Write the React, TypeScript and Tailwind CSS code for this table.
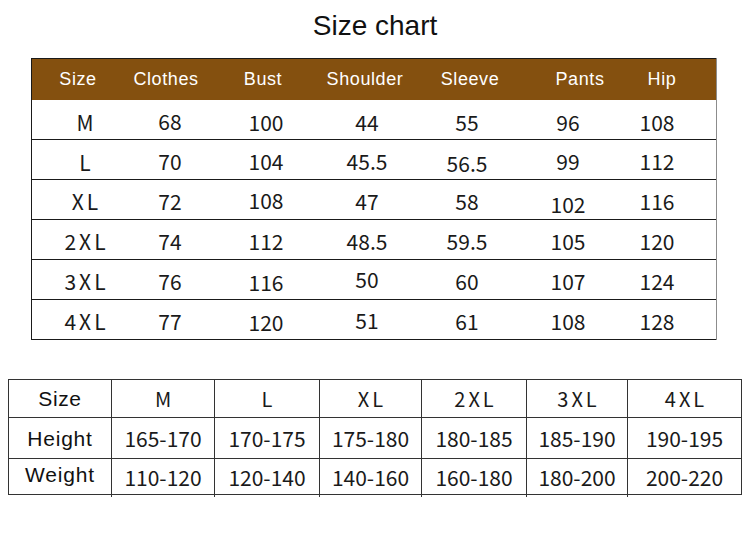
const heads = [
  { label: "Size", cls: "pr-[0px]" },
  { label: "Clothes", cls: "pr-[8px]" },
  { label: "Bust", cls: "pr-[6px]" },
  { label: "Shoulder", cls: "pr-[4px]" },
  { label: "Sleeve", cls: "pl-[2px]" },
  { label: "Pants", cls: "pl-[24px]" },
  { label: "Hip", cls: "pr-[8px]" },
]

// each cell: [text, extra class for small vertical drift seen in the chart]
const rows: [string, string][][] = [
  [["M", "pt-[5px]"], ["68", "pt-[4px]"], ["100", "pt-[6px]"], ["44", "pt-[6px]"], ["55", "pt-[6px]"], ["96", "pt-[6px]"], ["108", "pt-[6px]"]],
  [["L", "pt-[6px]"], ["70", "pt-[4px]"], ["104", "pt-[4px]"], ["45.5", "pt-[4px]"], ["56.5", "pt-[8px]"], ["99", "pt-[4px]"], ["112", "pt-[4px]"]],
  [["XL", "pt-[4px]"], ["72", "pt-[4px]"], ["108", "pt-[2px]"], ["47", "pt-[4px]"], ["58", "pt-[4px]"], ["102", "pt-[9px]"], ["116", "pt-[4px]"]],
  [["2XL", "pt-[4px]"], ["74", "pt-[4px]"], ["112", "pt-[4px]"], ["48.5", "pt-[4px]"], ["59.5", "pt-[4px]"], ["105", "pt-[4px]"], ["120", "pt-[4px]"]],
  [["3XL", "pt-[3px]"], ["76", "pt-[3px]"], ["116", "pt-[6px]"], ["50", "pt-[0px]"], ["60", "pt-[3px]"], ["107", "pt-[3px]"], ["124", "pt-[3px]"]],
  [["4XL", "pt-[3px]"], ["77", "pt-[3px]"], ["120", "pt-[6px]"], ["51", "pt-[1px]"], ["61", "pt-[3px]"], ["108", "pt-[3px]"], ["128", "pt-[3px]"]],
]

const colPad = ["", "", "", "", "pr-[4px]", "", "pr-[18px]"]

const sizes = ["M", "L", "XL", "2XL", "3XL", "4XL"]
const heights = ["165-170", "170-175", "175-180", "180-185", "185-190", "190-195"]
const weights = ["110-120", "120-140", "140-160", "160-180", "180-200", "200-220"]

const cjk = "font-['Noto_Sans_CJK_SC','Noto_Sans',sans-serif]"
const arial = "font-['Liberation_Sans',Arial,sans-serif]"

const App = () => {
  return (
    <div className="w-[750px] h-[534px] bg-white overflow-hidden">
      <div className={`h-[58px] pt-[11px] text-center text-[28px] leading-[30px] text-[#111] ${arial}`}>
        Size chart
      </div>

      {/* measurement table */}
      <div className="ml-[31px] w-[686px] border-l border-l-[#1a1a1a] border-r border-r-[#8c8c8c]">
        <div
          className={`grid grid-cols-[92px_92px_100px_102px_102px_96px_1fr] h-[42px] bg-[#84500f] border-t border-t-[#1a1a1a] items-center text-white text-[18px] tracking-[0.6px] ${arial}`}
        >
          {heads.map((h) => (
            <div key={h.label} className={`text-center ${h.cls}`}>
              {h.label}
            </div>
          ))}
        </div>
        {rows.map((row, i) => (
          <div
            key={i}
            className={`grid grid-cols-[92px_92px_100px_102px_102px_96px_1fr] h-[40px] border-b border-b-[#1a1a1a] text-[21px] text-[#1a1a1a] ${cjk}`}
          >
            {row.map(([v, cls], j) => (
              <div
                key={j}
                className={`flex items-center justify-center leading-none ${colPad[j]} ${cls} ${j === 0 ? "tracking-[3px] pl-[17px]" : ""}`}
              >
                {v}
              </div>
            ))}
          </div>
        ))}
      </div>

      {/* height / weight table */}
      <div className="mt-[39px] ml-[8px] w-[734px] border border-[#333]">
        <div className="grid grid-cols-[103px_103px_105px_102px_105px_101px_1fr] h-[38px] border-b border-b-[#333]">
          <div className={`flex items-center justify-center border-r border-r-[#333] text-[21px] tracking-[0.6px] text-[#111] ${arial}`}>
            Size
          </div>
          {sizes.map((s, i) => (
            <div
              key={s}
              className={`flex items-center justify-center pl-[3px] text-[20px] tracking-[3px] text-[#1a1a1a] ${cjk} ${i < 5 ? "border-r border-r-[#333]" : ""}`}
            >
              {s}
            </div>
          ))}
        </div>
        <div className="grid grid-cols-[103px_103px_105px_102px_105px_101px_1fr] h-[41px] border-b border-b-[#333]">
          <div className={`flex items-center justify-center pt-[2px] border-r border-r-[#333] text-[21px] tracking-[0.8px] text-[#111] ${arial}`}>
            Height
          </div>
          {heights.map((s, i) => (
            <div
              key={s}
              className={`flex items-center justify-center pt-[2px] text-[21px] text-[#1a1a1a] ${cjk} ${i < 5 ? "border-r border-r-[#333]" : ""}`}
            >
              {s}
            </div>
          ))}
        </div>
        <div className="grid grid-cols-[103px_103px_105px_102px_105px_101px_1fr] h-[35px]">
          <div className={`flex items-center justify-center pb-[6px] border-r border-r-[#333] text-[21px] tracking-[0.8px] text-[#111] ${arial}`}>
            Weight
          </div>
          {weights.map((s, i) => (
            <div
              key={s}
              className={`flex items-center justify-center text-[21px] text-[#1a1a1a] ${cjk} ${i < 5 ? "border-r border-r-[#333]" : ""}`}
            >
              {s}
            </div>
          ))}
        </div>
      </div>
    </div>
  )
}

export default App
